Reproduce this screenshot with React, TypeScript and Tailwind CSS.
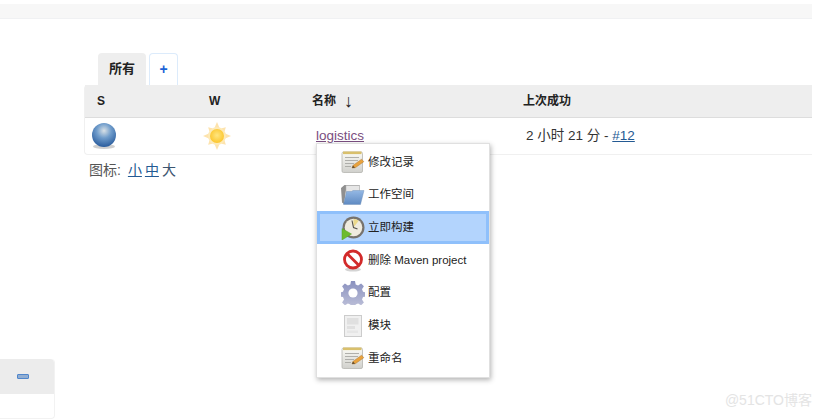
const FONT = "font-['Liberation_Sans','Noto_Sans_CJK_SC',sans-serif]"

function NotepadIcon() {
  return (
    <svg width="24" height="24" viewBox="0 0 24 24">
      <defs>
        <linearGradient id="padBody" x1="0" y1="0" x2="0" y2="1">
          <stop offset="0" stopColor="#fbfbf6" />
          <stop offset="1" stopColor="#d0d0cc" />
        </linearGradient>
      </defs>
      <rect x="1" y="2" width="20.5" height="20.5" rx="1.5" fill="url(#padBody)" stroke="#b5b5b0" strokeWidth="0.8" />
      <rect x="2" y="1.5" width="18.5" height="2.6" fill="#d9c06c" />
      <path d="M4 7.5h14M4 10.5h13M4 13.5h9M4 16.5h6" stroke="#a8a8a4" strokeWidth="0.9" />
      <path d="M11 18l1-2.6 8.6-6.2 2.2 2.5-8.6 6.1z" fill="#e9a23c" stroke="#b17a30" strokeWidth="0.5" />
      <path d="M11 18l1-2.6 2.1 2.3z" fill="#5c4a32" />
    </svg>
  )
}

function FolderIcon() {
  return (
    <svg width="24" height="24" viewBox="0 0 24 24">
      <defs>
        <linearGradient id="folderFront" x1="0" y1="0" x2="0" y2="1">
          <stop offset="0" stopColor="#94b8e4" />
          <stop offset="1" stopColor="#5f8ac2" />
        </linearGradient>
      </defs>
      <path d="M0 5l3.5-3h15v5H5l-2 14-2-1.5z" fill="#8f8f8f" />
      <rect x="5" y="2.5" width="13.5" height="7" fill="#e6e6e6" stroke="#b0b0b0" strokeWidth="0.5" />
      <path d="M2.5 21.5L5.5 8.5h5l1.5-1h11l-3.5 14z" fill="url(#folderFront)" stroke="#6a8bb3" strokeWidth="0.4" />
    </svg>
  )
}

function ClockIcon() {
  return (
    <svg width="24" height="24" viewBox="0 0 24 24">
      <circle cx="12.5" cy="11.5" r="11" fill="#77736d" />
      <circle cx="12.5" cy="11.5" r="8.8" fill="#efebdf" />
      <path d="M12.5 11.5V3a8.5 8.5 0 0 1 5.2 1.8z" fill="#ecd98a" />
      <path d="M11 4.5l1.5 7 4 1.5" fill="none" stroke="#55524b" strokeWidth="1.1" />
      <path d="M1 12.5l9.5 5.5-9.5 6z" fill="#6dbb2e" stroke="#57a324" strokeWidth="0.5" />
    </svg>
  )
}

function NoEntryIcon() {
  return (
    <svg width="24" height="24" viewBox="0 0 24 24">
      <ellipse cx="12" cy="21.5" rx="8" ry="2" fill="#d4d4d4" />
      <circle cx="12" cy="11.5" r="8.5" fill="#fff" stroke="#d22a2a" strokeWidth="2.8" />
      <path d="M6 5.5l12 12" stroke="#d22a2a" strokeWidth="2.8" />
    </svg>
  )
}

function GearIcon() {
  return (
    <svg width="24" height="24" viewBox="0 0 24 24">
      <defs>
        <linearGradient id="gearFill" x1="0" y1="0" x2="0" y2="1">
          <stop offset="0" stopColor="#8a91bf" />
          <stop offset="1" stopColor="#bec1d9" />
        </linearGradient>
      </defs>
      <path
        d="M10 0h4l.7 3.4 2.4 1 3-1.9 2.8 2.8-1.9 3 1 2.4 3 .7v4l-3 .7-1 2.4 1.9 3-2.8 2.8-3-1.9-2.4 1-.7 3.4h-4l-.7-3.4-2.4-1-3 1.9-2.8-2.8 1.9-3-1-2.4-3-.7v-4l3-.7 1-2.4-1.9-3 2.8-2.8 3 1.9 2.4-1z"
        fill="url(#gearFill)"
      />
      <circle cx="12" cy="12" r="4.6" fill="#fff" />
    </svg>
  )
}

function PageIcon() {
  return (
    <svg width="24" height="24" viewBox="0 0 24 24">
      <rect x="3.5" y="1.5" width="17" height="21" fill="#f0f0f0" stroke="#cccccc" />
      <rect x="6" y="4" width="11.5" height="6.5" fill="#e0e0e0" />
      <rect x="6" y="12" width="8" height="3" fill="#e0e0e0" />
      <rect x="6" y="16.5" width="11" height="2.5" fill="#e6e6e6" />
    </svg>
  )
}

function BlueBall() {
  return (
    <svg width="26" height="28" viewBox="0 0 26 28">
      <defs>
        <radialGradient id="ball" cx="0.5" cy="0.32" r="0.68">
          <stop offset="0" stopColor="#d9e1e6" />
          <stop offset="0.45" stopColor="#6f9ccb" />
          <stop offset="1" stopColor="#2a5c9d" />
        </radialGradient>
      </defs>
      <ellipse cx="13" cy="24.5" rx="11" ry="2.5" fill="#cfcfcf" />
      <circle cx="13" cy="13" r="12" fill="url(#ball)" />
    </svg>
  )
}

function Sun() {
  const rays = [0, 45, 90, 135, 180, 225, 270, 315]
  return (
    <svg width="28" height="28" viewBox="0 0 28 28">
      <defs>
        <radialGradient id="sunCore" cx="0.5" cy="0.45" r="0.55">
          <stop offset="0" stopColor="#ffe680" />
          <stop offset="1" stopColor="#fcc62d" />
        </radialGradient>
      </defs>
      {rays.map((r) => (
        <path key={r} d={r % 90 === 0 ? 'M11 7L14 0l3 7z' : 'M11.5 6L14 1.5 16.5 6z'} fill="#fde3ad" transform={`rotate(${r} 14 14)`} />
      ))}
      <circle cx="14" cy="14" r="9" fill="#fdeab8" />
      <circle cx="14" cy="14" r="7" fill="url(#sunCore)" />
    </svg>
  )
}

const menuItems = [
  { label: '修改记录', icon: <NotepadIcon /> },
  { label: '工作空间', icon: <FolderIcon /> },
  { label: '立即构建', icon: <ClockIcon />, active: true },
  { label: '删除 Maven project', icon: <NoEntryIcon /> },
  { label: '配置', icon: <GearIcon /> },
  { label: '模块', icon: <PageIcon /> },
  { label: '重命名', icon: <NotepadIcon /> },
]

export default function App() {
  return (
    <div className={`${FONT} relative h-[419px] w-[821px] overflow-hidden bg-white pt-1`}>
      <div className="h-[15px] w-[812px] border-b border-[#f0f1f3] bg-[#f7f7f7]" />

      <div className="mt-[34px] w-[812px] pl-[84px]">
        {/* Tabs */}
        <div className="flex h-8 items-end gap-[3px] pl-[14px]">
          <div className="flex h-8 w-[48px] items-center justify-center rounded-t-[4px] bg-[#eeeeee] text-[13px] font-bold text-[#222]">
            所有
          </div>
          <div className="flex h-8 w-[29px] items-center justify-center rounded-t-[4px] border border-b-0 border-[#dcebfb] text-[14px] font-bold text-[#1a62d6]">
            +
          </div>
        </div>

        {/* Job table */}
        <div className="rounded-l-[4px] border-b border-l border-[#f0f0f0]">
          <div className="flex h-[33px] items-center border-b border-[#dddddd] bg-[#eeeeee] text-[12px] font-bold text-[#222]">
            <div className="w-[124px] pl-[12px]">S</div>
            <div className="w-[103px]">W</div>
            <div className="flex w-[211px] items-center gap-[8px]">
              名称 <span className="text-[18px] font-normal leading-none">↓</span>
            </div>
            <div>上次成功</div>
          </div>
          <div className="flex h-[36px] items-center text-[13.5px] text-[#333]">
            <div className="w-[117px] pl-[6px]">
              <BlueBall />
            </div>
            <div className="w-[114px] pl-[1px]">
              <Sun />
            </div>
            <div className="w-[210px]">
              <a href="#" className="text-[#7a4e80] underline">logistics</a>
            </div>
            <div>
              2 小时 21 分 - <a href="#" className="text-[#245a93] underline">#12</a>
            </div>
          </div>
        </div>

        <div className="mt-[7px] pl-[5px] text-[14px] leading-[17px] text-[#555]">
          图标:
          <a href="#" className="ml-[7px] text-[#245a93] underline">小</a>
          <a href="#" className="ml-[3px] text-[#245a93] underline">中</a>
          <span className="ml-[3px] text-[#3b5570]">大</span>
        </div>
      </div>

      {/* Bottom-left widget */}
      <div className="mt-[180px] w-[55px] rounded-r-[4px] border-r border-b border-[#f2f2f2]">
        <div className="flex h-[35px] items-center justify-end rounded-tr-[4px] bg-[#ececec] pr-[25px]">
          <div className="h-[5px] w-[12px] rounded-[1px] border border-[#4f86cc] bg-[#92aed2]" />
        </div>
        <div className="h-[24px]" />
      </div>

      {/* Context menu */}
      <div className="absolute left-[316px] top-[143px] h-[235px] w-[174px] border border-[#e0e0e0] bg-white py-[2px] shadow-[1px_2px_5px_rgba(0,0,0,0.3)]">
        {menuItems.map((item) => (
          <div
            key={item.label}
            className={`flex h-[32.7px] items-center gap-[3px] pl-[24px] text-[11.5px] text-[#222] ${
              item.active ? 'border-[3px] border-[#8fc0fb] bg-[#b3d4fd] !pl-[21px]' : ''
            }`}
          >
            {item.icon}
            <span>{item.label}</span>
          </div>
        ))}
      </div>

      {/* Watermark */}
      <div className="absolute bottom-[8px] right-[9px] text-[14px] text-[#e4e4e4]">@51CTO博客</div>
    </div>
  )
}
